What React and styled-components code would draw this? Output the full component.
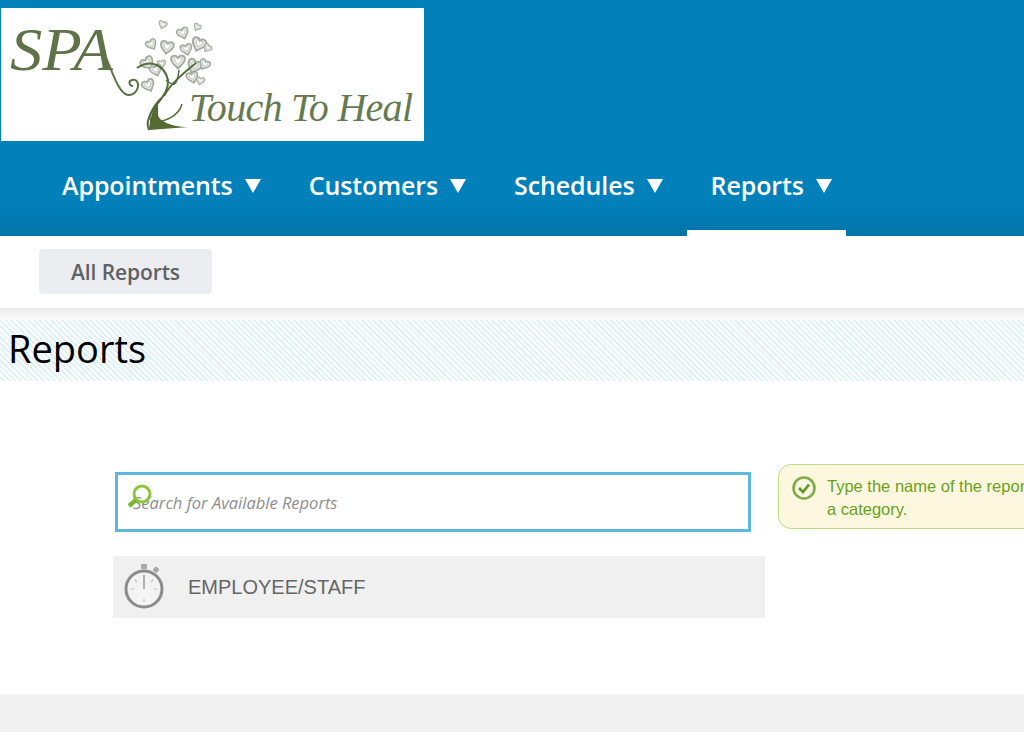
import React from "react";
import styled, { createGlobalStyle } from "styled-components";

const Global = createGlobalStyle`
  html, body { margin: 0; padding: 0; background: #fff; overflow: hidden; }
  #root { width: 1024px; height: 732px; overflow: hidden; }
`;
const Page = styled.div`
  width: 1024px; height: 732px; display: flex; flex-direction: column;
  font-family: "Open Sans", sans-serif; overflow: hidden; background: #fff;
`;
const Header = styled.header`
  height: 236px; box-sizing: border-box; flex: none; padding: 8px 0 0 1px;
  display: flex; flex-direction: column;
  background: linear-gradient(#0280ba 0, #0280ba 205px, #0274a8 236px);
`;
const LogoBox = styled.div`
  width: 423px; height: 133px; background: #fff; flex: none; line-height: 0;
`;
const Nav = styled.nav`
  display: flex; height: 95px; padding-left: 37px; align-items: stretch;
`;
const NavItem = styled.a`
  display: flex; align-items: center; gap: 12px; box-sizing: border-box;
  padding: 0 ${p => p.$pad}px 0 24px; margin-right: ${p => p.$gap}px;
  color: #fff; font-size: 25px; font-weight: 600; letter-spacing: -0.1px;
  height: 95px; padding-bottom: 1px;
  border-bottom: 6px solid ${p => (p.$active ? "#fff" : "transparent")};
`;
const Caret = styled.span`
  width: 0; height: 0; border-left: 8px solid transparent; border-right: 8px solid transparent;
  border-top: 14px solid #fff; margin-top: 1px;
`;
const SubBar = styled.div`
  height: 72px; flex: none; box-sizing: border-box; padding: 13px 0 0 39px; background: #fff;
`;
const SubButton = styled.button`
  width: 173px; height: 45px; border: 0; border-radius: 4px; background: #ebedf1; color: #5f6165;
  font: 600 21px "Open Sans", sans-serif; padding: 0; letter-spacing: -0.1px;
`;
const Shadow = styled.div`
  height: 12px; flex: none; background: linear-gradient(#ececec, #fafafa);
`;
const TitleBand = styled.div`
  height: 61px; flex: none; box-sizing: border-box; padding-left: 8px; display: flex; align-items: center;
  background: repeating-linear-gradient(45deg, #fff 0, #fff 2px, #dff2f9 2px, #dff2f9 4px);
`;
const Title = styled.h1`
  margin: 0; font-size: 38px; font-weight: 400; color: #000; line-height: 1; padding-bottom: 6px;
`;
const Main = styled.main`
  height: 314px; flex: none; box-sizing: border-box; padding: 83px 0 0 113px; display: flex; gap: 13px; align-items: flex-start;
`;
const Column = styled.div`
  width: 652px; flex: none; display: flex; flex-direction: column; gap: 24px; padding-top: 8px;
`;
const SearchBox = styled.div`
  position: relative; width: 636px; height: 60px; margin-left: 2px; box-sizing: border-box;
  border: 3px solid #5db8df; background: #fff; display: flex; align-items: center; padding-left: 15px;
  font-size: 16.5px; font-style: italic; color: #8e8e8e; font-family: "Open Sans", sans-serif;
`;
const KeyIcon = styled.svg`
  position: absolute; left: 9px; top: 8px;
`;
const Row = styled.div`
  height: 62px; background: #f0f0f0; display: flex; align-items: center; padding-left: 10px; gap: 23px;
  font: 20px "Liberation Sans", sans-serif; color: #666;
`;
const Tip = styled.div`
  width: 420px; height: 65px; flex: none; box-sizing: border-box; display: flex; gap: 10px; padding: 10px 0 0 12px;
  margin-right: -200px; background: #fef7df; border: 1.5px solid #b9dc80; border-radius: 13px;
  color: #67a320; font: 16.5px/23px "Liberation Sans", sans-serif; white-space: nowrap;
`;
const Footer = styled.footer`
  flex: 1; background: #f1f1f1;
`;

const heart = "M0 4C-2 -1 -9 0 -8 6C-7 11 -2 13 0 16C2 13 7 11 8 6C9 0 2 -1 0 4Z";
const hearts = [
  [163,21,.5,20],[180,28,.7,-20],[198,24,.45,30],[148,40,.65,-30],[167,41,.8,10],[184,44,.7,-15],[200,38,.85,20],
  [209,45,.5,40],[143,58,.8,-35],[160,60,.5,-10],[177,55,.85,0],[196,60,.85,25],[206,60,.65,30],[153,65,.7,-20],[190,72,.7,-15],[145,80,.75,-25],[200,77,.5,10]
];

const Logo = () => (
  <svg width="423" height="133" viewBox="0 0 423 133">
    {hearts.map(([x, y, s, r], i) => (
      <g key={i} transform={`translate(${x} ${y - 8}) rotate(${r}) scale(${s})`}>
        <path d={heart} fill="#e4e6e2" stroke="#a3aaa0" strokeWidth="2.2" />
        <path d={heart} transform="scale(.5) translate(0 6)" fill="#fff" stroke="#b5bab2" strokeWidth="2" />
      </g>
    ))}
    <text x="9" y="62" fill="#5f7248" fontFamily="Liberation Serif" fontStyle="italic" fontSize="62" textLength="103" lengthAdjust="spacingAndGlyphs">SPA</text>
    <text x="188" y="113" fill="#657a50" fontFamily="Liberation Serif" fontStyle="italic" fontSize="40" textLength="224" lengthAdjust="spacing">Touch To Heal</text>
    <path d="M105 50C112 65 118 86 127 87C138 88 141 70 131 72C127 73 128 78 132 78" fill="none" stroke="#5f7248" strokeWidth="2" />
    <path d="M136 60C150 50 164 58 167 72C168 85 158 92 150 105C146 112 146 118 148 122" fill="none" stroke="#556b3c" strokeWidth="2" />
    <path d="M195 55C183 65 170 75 163 88" fill="none" stroke="#556b3c" strokeWidth="2" />
    <path d="M165 72C172 78 176 80 178 62" fill="none" stroke="#556b3c" strokeWidth="1.5" />
    <path d="M160 90C150 100 147 110 150 113C162 116 178 108 181 96" fill="none" stroke="#556b3c" strokeWidth="1.5" />
    <path d="M157 93C151 103 149 110 148 122L188 119C170 119 158 113 157 107Z" fill="#556b33" />
  </svg>
);

const Stopwatch = () => (
  <svg width="42" height="46" viewBox="0 0 42 46">
    <rect x="18" y="0" width="6" height="5" rx="1" fill="#a8a8a8" />
    <rect x="31" y="3" width="5" height="5" rx="1" fill="#a8a8a8" transform="rotate(40 33 5)" />
    <circle cx="21" cy="25" r="18" fill="#f4f4f4" stroke="#8b8b8b" strokeWidth="3" />
    <path d="M21 11V25" stroke="#999" strokeWidth="1.5" />
    <path d="M21 38V35M8 25H11M34 25H31M12 16L14 18M30 16L28 18" stroke="#bdbdbd" strokeWidth="1.2" />
  </svg>
);

const CheckCircle = () => (
  <svg width="26" height="26" viewBox="0 0 26 26" style={{ flex: "none" }}>
    <circle cx="13" cy="13" r="10.5" fill="#fdf8e4" stroke="#7fae45" strokeWidth="2.6" />
    <path d="M8 13L12 17L18 9.5" fill="none" stroke="#5f9a2a" strokeWidth="2.8" />
  </svg>
);

const items = [
  { label: "Appointments", pad: 24, gap: 0 },
  { label: "Customers", pad: 24, gap: 0 },
  { label: "Schedules", pad: 24, gap: 0 },
  { label: "Reports", pad: 14, gap: 0, active: true },
];

export default function App() {
  return (
    <Page>
      <Global />
      <Header>
        <LogoBox><Logo /></LogoBox>
        <Nav>
          {items.map(i => (
            <NavItem key={i.label} $pad={i.pad} $gap={i.gap} $active={i.active}>
              {i.label}<Caret />
            </NavItem>
          ))}
        </Nav>
      </Header>
      <SubBar><SubButton>All Reports</SubButton></SubBar>
      <Shadow />
      <TitleBand><Title>Reports</Title></TitleBand>
      <Main>
        <Column>
          <SearchBox>
            <KeyIcon width="28" height="28" viewBox="0 0 28 28">
              <circle cx="15" cy="11" r="8" fill="none" stroke="#8cc63f" strokeWidth="3" />
              <path d="M9 17L2 23" stroke="#7cb82f" strokeWidth="4.5" />
            </KeyIcon>
            Search for Available Reports
          </SearchBox>
          <Row><Stopwatch />EMPLOYEE/STAFF</Row>
        </Column>
        <Tip>
          <CheckCircle />
          <div>Type the name of the report you are looking for or<br />a category.</div>
        </Tip>
      </Main>
      <Footer />
    </Page>
  );
}
